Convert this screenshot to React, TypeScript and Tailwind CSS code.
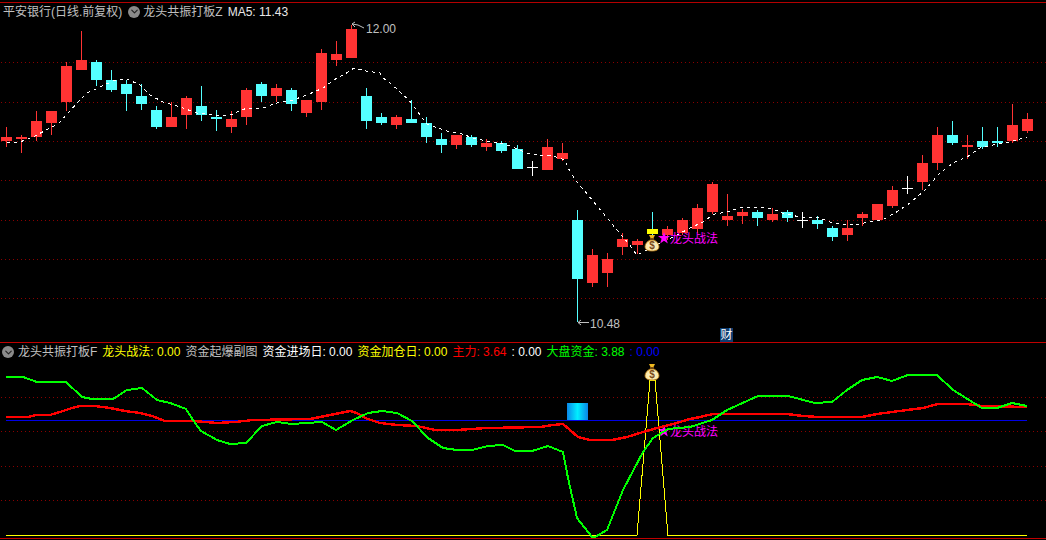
import { ChevronDown } from "lucide-react";

type Candle = [number, number, number, number, "r" | "c" | "w" | "y"];

// wick top, wick bottom, body top, body bottom, colour
const candles: Candle[] = [
  [127, 147, 137, 141, "r"], [135, 153, 137, 139, "r"], [111, 141, 121, 137, "r"], [111, 135, 111, 123, "r"],
  [62, 111, 66, 102, "r"], [31, 70, 60, 70, "r"], [60, 86, 62, 80, "c"], [70, 92, 80, 90, "c"],
  [80, 111, 84, 94, "c"], [84, 110, 96, 104, "c"], [106, 129, 110, 127, "c"], [102, 127, 117, 127, "r"],
  [96, 129, 98, 115, "r"], [86, 121, 106, 115, "c"], [110, 131, 117, 119, "c"], [111, 133, 119, 127, "r"],
  [88, 125, 90, 117, "r"], [82, 102, 84, 96, "c"], [84, 102, 88, 96, "r"], [88, 111, 90, 104, "c"],
  [100, 117, 100, 113, "r"], [49, 110, 53, 102, "r"], [41, 66, 54, 60, "r"], [25, 58, 29, 58, "r"],
  [88, 129, 96, 121, "c"], [113, 125, 117, 123, "c"], [115, 129, 117, 125, "r"], [100, 123, 119, 123, "c"],
  [117, 143, 123, 137, "c"], [133, 153, 139, 145, "c"], [135, 149, 135, 145, "r"], [135, 147, 137, 145, "c"],
  [139, 151, 143, 147, "r"], [141, 153, 143, 151, "c"], [145, 169, 149, 169, "c"], [161, 176, 167, 168, "w"],
  [139, 170, 147, 170, "r"], [143, 161, 153, 159, "r"], [210, 322, 220, 279, "c"], [249, 287, 255, 283, "r"],
  [253, 287, 259, 273, "r"], [233, 255, 239, 247, "r"], [239, 254, 241, 245, "r"], [212, 238, 229, 234, "y"],
  [226, 240, 229, 235, "r"], [218, 235, 220, 233, "r"], [204, 233, 208, 229, "r"], [182, 214, 184, 212, "r"],
  [194, 226, 216, 220, "r"], [209, 224, 212, 216, "r"], [210, 226, 212, 218, "c"], [208, 222, 214, 220, "r"],
  [210, 222, 212, 218, "c"], [212, 228, 220, 221, "w"], [216, 229, 220, 224, "c"], [226, 241, 228, 237, "c"],
  [220, 241, 228, 235, "r"], [212, 226, 214, 218, "r"], [204, 220, 204, 220, "r"], [186, 208, 190, 206, "r"],
  [176, 194, 188, 189, "w"], [155, 190, 163, 182, "r"], [127, 170, 135, 163, "r"], [121, 145, 135, 143, "c"],
  [135, 159, 145, 147, "r"], [127, 149, 141, 147, "c"], [127, 147, 141, 143, "c"], [104, 143, 125, 141, "r"],
  [113, 133, 119, 131, "r"],
];

const candleColors = { r: "#ff3333", c: "#54ffff", w: "#ffffff", y: "#ffff00" };

const maLine =
  "7,143 20,142 33,137 50,128 58,124 68,113 78,102 87,93 100,87 113,81 127,79 140,85 150,95 163,102 180,107 197,113 213,115 230,115 247,108 263,108 277,103 290,101 307,95 323,88 337,78 345,74 354,68 366,71 380,73 383,78 390,83 397,89 403,95 408,99 418,112 427,124 438,128 450,132 462,134 473,138 487,141 500,143 513,147 527,153 540,155 553,156 565,160 568,168 577,182 588,195 598,207 608,219 617,230 628,243 637,255 643,252 660,243 677,235 690,228 703,222 710,217 715,214 727,212 740,208 757,207 773,209 782,213 800,217 817,217 830,222 840,224 853,225 870,222 882,220 895,213 910,203 925,190 940,173 953,163 967,157 980,148 993,145 1010,142 1027,137";

const redLine =
  "6,417 28,417 36,415 50,415 60,412 72,408 80,406 95,406 110,408 125,411 140,413 152,416 165,421 193,421 217,423 235,422 253,420 310,419 330,415 350,411 357,413 365,418 380,423 397,425 417,426 435,430 457,430 487,428 540,427 553,425 563,424 570,430 578,437 590,440 612,440 627,437 643,432 657,428 673,424 690,419 700,417 713,414 787,414 803,416 818,417 862,417 877,414 907,410 923,408 938,404 967,404 982,406 1027,407";

const greenLine =
  "6,377 23,377 37,382 66,382 82,397 92,399 113,399 127,390 142,388 157,400 170,403 186,409 193,420 201,431 217,440 230,444 246,443 262,426 277,422 292,424 322,422 336,430 353,420 368,413 382,411 397,413 412,421 428,438 443,448 457,450 472,450 488,446 503,445 515,451 532,451 548,446 563,452 568,478 577,518 592,537 595,537 607,530 623,490 643,452 653,438 668,429 690,427 712,420 727,410 758,396 788,396 815,403 832,402 847,390 862,380 877,377 892,381 908,375 937,375 953,390 982,408 997,408 1012,403 1027,406";

const labelFont = "'Liberation Sans','Noto Sans CJK SC',sans-serif";

function GridLines({ ys }: { ys: number[] }) {
  return (
    <>
      {ys.map((y) => (
        <line key={y} x1={1} x2={1046} y1={y + 0.5} y2={y + 0.5} stroke="#8a0000" strokeDasharray="1 3" shapeRendering="crispEdges" />
      ))}
    </>
  );
}

// star plus label, star centre at x,y
function BattleLabel({ x, y }: { x: number; y: number }) {
  return (
    <g>
      <polygon
        transform={`translate(${x} ${y})`}
        points="0,-6 1.5,-2 6,-2 2.4,0.8 3.8,5.5 0,2.7 -3.8,5.5 -2.4,0.8 -6,-2 -1.5,-2"
        fill="#ff00ff"
      />
      <text x={x + 6} y={y + 5} fontSize={12} fill="#ff00ff" fontFamily={labelFont}>
        龙头战法
      </text>
    </g>
  );
}

// money bag marker, top centre at x,y
function MoneyBag({ x, y, id }: { x: number; y: number; id: string }) {
  return (
    <g transform={`translate(${x} ${y})`}>
      <defs>
        <radialGradient id={id} cx="50%" cy="55%" r="60%">
          <stop offset="0%" stopColor="#fff8d8" />
          <stop offset="75%" stopColor="#fbe6a0" />
          <stop offset="100%" stopColor="#e0a030" />
        </radialGradient>
      </defs>
      <path d="M-3 0 L3 0 L1.5 3 L-1.5 3 Z" fill="#f0b820" />
      <rect x={-2} y={3} width={4} height={1.5} fill="#7a4a10" />
      <path d="M-2 5 C-5 6.5 -7 9 -7 11.5 C-7 15 -4 16 0 16 C4 16 7 15 7 11.5 C7 9 5 6.5 2 5 Z" fill={`url(#${id})`} stroke="#b77a18" strokeWidth={0.8} />
      <text x={0} y={14} textAnchor="middle" fontSize={10} fontWeight={700} fill="#7a4a18" fontFamily="'Liberation Sans',sans-serif">
        $
      </text>
    </g>
  );
}

function MainChart() {
  return (
    <svg width={1046} height={322} viewBox="0 20 1046 322" className="block">
      <GridLines ys={[62, 102, 141, 180, 220, 259, 298]} />
      {candles.map(([top, bottom, bodyTop, bodyBottom, c], i) => {
        const x = Math.round(6 + 15.015 * i);
        const wick = c === "y" ? candleColors.c : candleColors[c];
        return (
          <g key={i} shapeRendering="crispEdges">
            <rect x={x} y={top} width={1} height={bottom - top} fill={wick} />
            <rect x={x - 5} y={bodyTop} width={11} height={bodyBottom - bodyTop} fill={candleColors[c]} />
          </g>
        );
      })}
      <polyline points={maLine} fill="none" stroke="#ffffff" strokeWidth={1} strokeDasharray="3 4" shapeRendering="crispEdges" />

      {/* high / low marks */}
      <path d="M352 24 L355 22 M352 24 L355 27 M352 24 L358 25 L364 28" fill="none" stroke="#c0c0c0" />
      <text x={366} y={33} fontSize={12} fill="#c0c0c0" fontFamily={labelFont}>
        12.00
      </text>
      <path d="M578 322.5 L581 320 M578 322.5 L581 325 M578 322.5 L589 322.5" fill="none" stroke="#c0c0c0" />
      <text x={590} y={328} fontSize={12} fill="#c0c0c0" fontFamily={labelFont}>
        10.48
      </text>

      <BattleLabel x={664} y={238} />
      <MoneyBag x={652} y={235} id="bagMain" />
    </svg>
  );
}

function SubChart() {
  return (
    <svg width={1046} height={177} viewBox="0 361 1046 177" className="block">
      <GridLines ys={[397, 431, 466, 500]} />
      <defs>
        <linearGradient id="capBlock" x1="0" x2="1" y1="0" y2="0">
          <stop offset="0%" stopColor="#0a86e8" />
          <stop offset="50%" stopColor="#00eeff" />
          <stop offset="100%" stopColor="#0a86e8" />
        </linearGradient>
      </defs>
      <rect x={567} y={403} width={21} height={17} fill="url(#capBlock)" />
      <rect x={6} y={420} width={1021} height={1} fill="#0000e6" />
      <BattleLabel x={664} y={431} />
      <polyline points="6,535.5 637,535.5 650,380 655,380 668,535.5 1027,535.5" fill="none" stroke="#ffff00" strokeWidth={1} shapeRendering="crispEdges" />
      <polyline points={redLine} fill="none" stroke="#ff0000" strokeWidth={2.4} shapeRendering="crispEdges" />
      <polyline points={greenLine} fill="none" stroke="#00ff00" strokeWidth={2} shapeRendering="crispEdges" />
      <MoneyBag x={652} y={364} id="bagSub" />
    </svg>
  );
}

function FoldIcon() {
  return (
    <div className="flex h-3 w-3 shrink-0 items-center justify-center rounded-full bg-[#8a8a8a]">
      <ChevronDown size={11} strokeWidth={2.5} className="text-[#222222]" />
    </div>
  );
}

export default function App() {
  return (
    <div className="flex h-[540px] w-[1046px] flex-col overflow-hidden bg-black pt-[2px] font-['Liberation_Sans','Noto_Sans_CJK_SC',sans-serif] text-[12px] leading-none">
      {/* Price panel */}
      <div className="relative border-t border-[#b40000]">
        <div className="flex h-[17px] items-center pl-[3px] text-[#c0c0c0]">
          <span>平安银行(日线.前复权)</span>
          <span className="ml-[6px]">
            <FoldIcon />
          </span>
          <span className="ml-[3px]">龙头共振打板Z</span>
          <span className="ml-[5px] text-[#e8e8e8]">MA5: 11.43</span>
        </div>
        <MainChart />
        <div className="absolute bottom-0 left-[720px] flex h-[14px] w-[13px] items-center justify-center bg-[#0f3d70] text-white">
          财
        </div>
      </div>

      {/* Indicator panel */}
      <div className="border-t border-[#c00000]">
        <div className="flex h-[18px] items-center pl-[2px] text-[#c0c0c0]">
          <FoldIcon />
          <span className="ml-[4px]">龙头共振打板F</span>
          <span className="ml-[5px] text-[#ffff00]">龙头战法: 0.00</span>
          <span className="ml-[5px]">资金起爆副图</span>
          <span className="ml-[5px] text-white">资金进场日: 0.00</span>
          <span className="ml-[5px] text-[#ffff00]">资金加仓日: 0.00</span>
          <span className="ml-[5px] text-[#ff0000]">主力: 3.64</span>
          <span className="ml-[5px] text-white">: 0.00</span>
          <span className="ml-[5px] text-[#00ff00]">大盘资金: 3.88</span>
          <span className="ml-[5px] text-[#0000ff]">: 0.00</span>
        </div>
        <SubChart />
      </div>
      <div className="h-px bg-[#c00000]" />
    </div>
  );
}
